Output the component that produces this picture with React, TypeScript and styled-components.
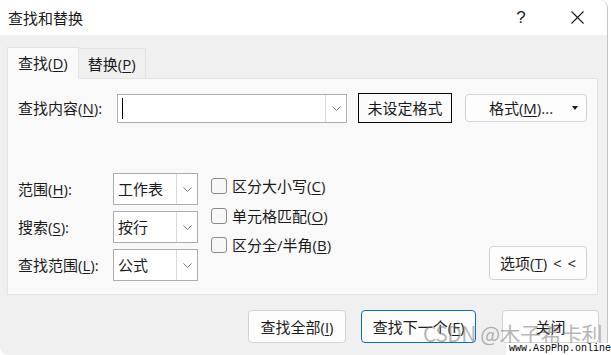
import React from 'react';
import styled, { createGlobalStyle } from 'styled-components';

const GlobalStyle = createGlobalStyle`
    html, body {
        margin: 0;
        padding: 0;
        background: #ffffff;
    }

    body {
        font-family: "Open Sans", "Noto Sans CJK SC", sans-serif;
        font-size: 15px;
        color: #1a1a1a;
    }
`;

const Window = styled.div`
    position: relative;
    width: 608px;
    height: 355px;
    box-sizing: border-box;
    border-right: 1px solid #c4c4c4;
    border-radius: 8px;
    overflow: hidden;
    background: #f0f0f0;
`;

const TitleBar = styled.div`
    display: flex;
    align-items: center;
    height: 35px;
    padding-left: 8px;
    background: #ffffff;
`;

const Title = styled.div`
    flex: 1;
    font-size: 15px;
    line-height: 20px;
`;

const TitleButton = styled.div<{ $last?: boolean }>`
    display: flex;
    align-items: center;
    justify-content: center;
    width: 46px;
    height: 35px;
    margin-right: ${({ $last }) => ($last ? '7px' : '10px')};
    font-family: "Liberation Sans", sans-serif;
    font-size: 17px;
    color: #222;
`;

const Body = styled.div`
    padding: 12px 0 0 7px;
`;

const TabBar = styled.div`
    display: flex;
    align-items: flex-end;
    height: 32px;
    margin-bottom: -1px;
    position: relative;
    z-index: 1;
`;

const Tab = styled.div<{ $active?: boolean }>`
    display: flex;
    align-items: center;
    box-sizing: border-box;
    height: ${({ $active }) => ($active ? '32px' : '31px')};
    padding: 0 ${({ $active }) => ($active ? '10px' : '9px')};
    border: 1px solid #e3e3e3;
    border-bottom: ${({ $active }) => ($active ? '1px solid #f9f9f9' : '1px solid #e3e3e3')};
    border-left: ${({ $active }) => ($active ? '1px solid #e3e3e3' : 'none')};
    background: ${({ $active }) => ($active ? '#f9f9f9' : '#f0f0f0')};
    line-height: 20px;
`;

const Key = styled.u`
    text-decoration: underline;
    text-underline-offset: 2px;
    text-decoration-thickness: 1px;
`;

const Panel = styled.div`
    width: 591px;
    height: 217px;
    box-sizing: border-box;
    padding: 14px 10px 13px 10px;
    border: 1px solid #e3e3e3;
    background: #f9f9f9;
`;

const FindRow = styled.div`
    display: flex;
    align-items: center;
    height: 30px;
`;

const FieldLabel = styled.div<{ $width: number }>`
    width: ${({ $width }) => $width}px;
    flex-shrink: 0;
    line-height: 20px;
    white-space: nowrap;
`;

const Combo = styled.div<{ $width: number; $height: number }>`
    display: flex;
    box-sizing: border-box;
    width: ${({ $width }) => $width}px;
    height: ${({ $height }) => $height}px;
    border: 1px solid #adadad;
    background: #ffffff;
`;

const ComboText = styled.div`
    flex: 1;
    display: flex;
    align-items: center;
    padding-left: 4px;
    line-height: 20px;
`;

const Caret = styled.div`
    width: 1px;
    height: 21px;
    background: #000;
`;

const DropButton = styled.div`
    display: flex;
    align-items: center;
    justify-content: center;
    width: 20px;
    border-left: 1px solid #dadada;
    background: #ffffff;
`;

const Button = styled.div<{ $width: number; $height: number; $primary?: boolean }>`
    display: flex;
    align-items: center;
    justify-content: center;
    box-sizing: border-box;
    width: ${({ $width }) => $width}px;
    height: ${({ $height }) => $height}px;
    border: 1px solid ${({ $primary }) => ($primary ? '#0f6cbd' : '#d3d3d3')};
    border-radius: 4px;
    background: #fdfdfd;
    line-height: 20px;
    white-space: nowrap;
`;

const FormatStateButton = styled.div`
    display: flex;
    align-items: center;
    justify-content: center;
    box-sizing: border-box;
    width: 94px;
    height: 30px;
    margin-left: 11px;
    border: 1px solid #000;
    background: #fbfbfb;
    line-height: 20px;
`;

const FormatButton = styled(Button)`
    position: relative;
    margin-left: 13px;
    padding-right: 10px;
`;

const DropMark = styled.span`
    position: absolute;
    right: 8px;
    top: 11px;
    width: 0;
    height: 0;
    border-left: 3.5px solid transparent;
    border-right: 3.5px solid transparent;
    border-top: 4px solid #1a1a1a;
`;

const OptionsRow = styled.div`
    display: flex;
    justify-content: space-between;
    align-items: flex-end;
    margin-top: 50px;
`;

const OptionsLeft = styled.div`
    display: flex;
    align-items: flex-start;
`;

const SelectGrid = styled.div`
    display: grid;
    grid-template-columns: 95px 85px;
    row-gap: 6px;
    align-items: center;
`;

const CheckList = styled.div`
    display: flex;
    flex-direction: column;
    gap: 9.5px;
    margin-left: 13px;
    padding-top: 3px;
`;

const CheckRow = styled.label`
    display: flex;
    align-items: center;
    height: 20px;
    line-height: 20px;
`;

const CheckBox = styled.span`
    box-sizing: border-box;
    width: 16px;
    height: 16px;
    margin-right: 5px;
    border: 1px solid #8b8b8b;
    border-radius: 3px;
    background: #f7f7f7;
`;

const OptionsButton = styled(Button)`
    margin-bottom: 1px;
    word-spacing: 2px;
`;

const Footer = styled.div`
    display: flex;
    justify-content: flex-end;
    padding: 15px 8px 0 0;
`;

const FooterButton = styled(Button)<{ $gap?: number }>`
    margin-left: ${({ $gap }) => $gap ?? 0}px;
`;

const Watermark = styled.div`
    position: absolute;
    left: 423px;
    top: 319px;
    font-family: "Noto Sans CJK SC", "Noto Sans", sans-serif;
    font-size: 21px;
    line-height: 28px;
    color: rgba(120, 120, 120, 0.55);
    white-space: nowrap;
    letter-spacing: -0.5px;
`;

const SiteMark = styled.div`
    position: absolute;
    right: 0;
    bottom: 0;
    padding-left: 3px;
    background: #ffffff;
    font-family: "Liberation Mono", monospace;
    font-size: 10px;
    line-height: 12px;
    color: #000;
    white-space: nowrap;
`;

const Chevron = () => (
    <svg width="9" height="5" viewBox="0 0 9 5">
        <path d="M0.5 0.5 L4.5 4.5 L8.5 0.5" fill="none" stroke="#6a6a6a" strokeWidth="0.9" />
    </svg>
);

const CloseIcon = () => (
    <svg width="13" height="13" viewBox="0 0 13 13">
        <path d="M0.5 0.5 L12.5 12.5 M12.5 0.5 L0.5 12.5" stroke="#1a1a1a" strokeWidth="1.1" />
    </svg>
);

const Select: React.FC<{ value: string }> = ({ value }) => (
    <Combo $width={85} $height={32}>
        <ComboText>{value}</ComboText>
        <DropButton>
            <Chevron />
        </DropButton>
    </Combo>
);

const selects = [
    { label: '范围', key: 'H', value: '工作表' },
    { label: '搜索', key: 'S', value: '按行' },
    { label: '查找范围', key: 'L', value: '公式' }
];

const checks = [
    { label: '区分大小写', key: 'C' },
    { label: '单元格匹配', key: 'O' },
    { label: '区分全/半角', key: 'B' }
];

const App: React.FC = () => (
    <>
        <GlobalStyle />
        <Window>
            <TitleBar>
                <Title>查找和替换</Title>
                <TitleButton>?</TitleButton>
                <TitleButton $last>
                    <CloseIcon />
                </TitleButton>
            </TitleBar>
            <Body>
                <TabBar>
                    <Tab $active>
                        查找(<Key>D</Key>)
                    </Tab>
                    <Tab>
                        替换(<Key>P</Key>)
                    </Tab>
                </TabBar>
                <Panel>
                    <FindRow>
                        <FieldLabel $width={99}>
                            查找内容(<Key>N</Key>):
                        </FieldLabel>
                        <Combo $width={230} $height={29}>
                            <ComboText>
                                <Caret />
                            </ComboText>
                            <DropButton>
                                <Chevron />
                            </DropButton>
                        </Combo>
                        <FormatStateButton>未设定格式</FormatStateButton>
                        <FormatButton $width={122} $height={28}>
                            格式(<Key>M</Key>)...
                            <DropMark />
                        </FormatButton>
                    </FindRow>
                    <OptionsRow>
                        <OptionsLeft>
                            <SelectGrid>
                                {selects.map(s => (
                                    <React.Fragment key={s.key}>
                                        <FieldLabel $width={95}>
                                            {s.label}(<Key>{s.key}</Key>):
                                        </FieldLabel>
                                        <Select value={s.value} />
                                    </React.Fragment>
                                ))}
                            </SelectGrid>
                            <CheckList>
                                {checks.map(c => (
                                    <CheckRow key={c.key}>
                                        <CheckBox />
                                        {c.label}(<Key>{c.key}</Key>)
                                    </CheckRow>
                                ))}
                            </CheckList>
                        </OptionsLeft>
                        <OptionsButton $width={98} $height={34}>
                            选项(<Key>T</Key>) &lt; &lt;
                        </OptionsButton>
                    </OptionsRow>
                </Panel>
                <Footer>
                    <FooterButton $width={98} $height={33}>
                        查找全部(<Key>I</Key>)
                    </FooterButton>
                    <FooterButton $width={115} $height={33} $primary $gap={15}>
                        查找下一个(<Key>F</Key>)
                    </FooterButton>
                    <FooterButton $width={97} $height={33} $gap={26}>
                        关闭
                    </FooterButton>
                </Footer>
            </Body>
            <Watermark>CSDN @木子希卡利</Watermark>
        </Window>
        <SiteMark>www.AspPhp.online</SiteMark>
    </>
);

export default App;
